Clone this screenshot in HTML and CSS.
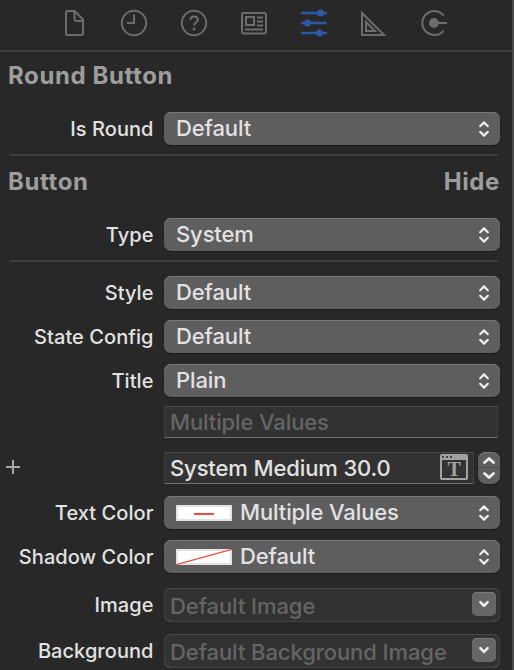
FILE: index.html
```html
<!DOCTYPE html>
<html lang="en">
<head>
<meta charset="utf-8">
<title>Attributes Inspector</title>
<link rel="stylesheet" href="styles.css">
</head>
<body>
<svg class="defs" width="0" height="0" aria-hidden="true">
  <symbol id="updown" viewBox="0 0 12 18"><path d="M2.200 6.200 6 2.400l3.800 3.800M2.200 11.800l3.800 3.800 3.800-3.800"/></symbol>
  <symbol id="down" viewBox="0 0 12 8"><path d="m2.400 2.200 3.600 3.600 3.600-3.600"/></symbol>
</svg>
<main class="inspector">
  <nav class="tabs">
    <svg class="tab" viewBox="0 0 28 28"><path d="M7 2h7.500l8.500 8.500V24q0 2-2 2H8q-2 0-2-2V4q0-2 2-2ZM14.500 2v8q0 2 2 2H23"/></svg>
    <svg class="tab" viewBox="0 0 28 28"><circle cx="14" cy="14" r="12.200"/><path d="M14 5.500v8.500H7"/></svg>
    <svg class="tab" viewBox="0 0 28 28"><circle cx="14" cy="14" r="12.200"/><path d="M10.500 11q.2-3.500 3.700-3.500t3.700 3.200c0 2.700-3.800 2.700-3.800 5.800"/><circle class="solid" cx="14" cy="20" r="1.400"/></svg>
    <svg class="tab" viewBox="0 0 28 28"><rect x="2" y="4" width="24" height="20.500" rx="2"/><path d="M6 8h8v8H6zM17 8.500h6M17 12.500h6M17 16.500h6M5 20.500h18"/></svg>
    <svg class="tab active" viewBox="0 0 28 28"><path d="M2.200 4h23.600M2.200 14h23.600M2.200 24h23.600"/><circle class="solid" cx="20.500" cy="4" r="3.500"/><circle class="solid" cx="7.500" cy="14" r="3.500"/><circle class="solid" cx="19.500" cy="24" r="3.500"/></svg>
    <svg class="tab" viewBox="0 0 28 28"><path d="M2 4V26H24ZM6 13v9h9Z"/></svg>
    <svg class="tab" viewBox="0 0 28 28"><path d="M23.700 6.500A12 12 0 1 0 23.700 21.500M14 14h13"/><circle class="solid" cx="14" cy="14" r="5"/></svg>
  </nav>

  <section class="group">
    <header class="heading"><h2>Round Button</h2></header>
    <div class="row"><label>Is Round</label><div class="select"><span>Default</span><svg class="arrows"><use href="#updown"/></svg></div></div>
  </section>

  <section class="group">
    <header class="heading"><h2>Button</h2><button class="hide">Hide</button></header>
    <div class="row"><label>Type</label><div class="select"><span>System</span><svg class="arrows"><use href="#updown"/></svg></div></div>
  </section>

  <section class="group fields">
    <div class="row"><label>Style</label><div class="select"><span>Default</span><svg class="arrows"><use href="#updown"/></svg></div></div>
    <div class="row"><label>State Config</label><div class="select"><span>Default</span><svg class="arrows"><use href="#updown"/></svg></div></div>
    <div class="row"><label>Title</label><div class="select"><span>Plain</span><svg class="arrows"><use href="#updown"/></svg></div></div>
    <div class="row title-row"><span></span><div class="field muted"><span>Multiple Values</span></div></div>
    <div class="row font-row">
      <svg class="plus" viewBox="0 0 14 14"><path d="M7 0v14M0 7h14"/></svg>
      <div class="font-control">
        <div class="field"><span>System Medium 30.0</span>
          <span class="font-button"><span class="dots"><i></i><i></i><i></i></span><b>T</b></span>
        </div>
        <div class="stepper"><svg viewBox="0 0 22 32"><path d="m6.500 10.500 4.500-4 4.500 4M6.500 21.500l4.500 4 4.500-4"/><path class="divide" d="M0 15.500h22"/></svg></div>
      </div>
    </div>
    <div class="row"><label>Text Color</label><div class="select"><svg class="swatch" viewBox="0 0 56 16"><path class="thick" d="M18 9h20"/></svg><span>Multiple Values</span><svg class="arrows"><use href="#updown"/></svg></div></div>
    <div class="row"><label>Shadow Color</label><div class="select"><svg class="swatch" viewBox="0 0 56 16"><path d="M0 15.700 56 .3"/></svg><span>Default</span><svg class="arrows"><use href="#updown"/></svg></div></div>
    <div class="row image-row"><label>Image</label><div class="combo"><span>Default Image</span><span class="drop"><svg><use href="#down"/></svg></span></div></div>
    <div class="row background-row"><label>Background</label><div class="combo"><span>Default Background Image</span><span class="drop"><svg><use href="#down"/></svg></span></div></div>
  </section>
</main>
</body>
</html>
```

FILE: styles.css
```css
* { box-sizing: border-box; }
body {
  margin: 0;
  background: #282828;
  color: #e2e2e2;
  font-family: Inter, "Liberation Sans", sans-serif;
}
.defs { display: block; }
.inspector { height: 670px; overflow: hidden; border-right: 2px solid #4a4a4a; }
.tabs {
  height: 52px;
  padding: 9px 0 0 60px;
  display: flex;
  gap: 32px;
  border-bottom: 2px solid #3e3e3e;
}
.tab { width: 28px; height: 28px; flex: none; fill: none; stroke: #6d6d6d; stroke-width: 2; }
.tab .solid { fill: #6d6d6d; stroke: none; }
.tab.active { stroke: #2b5ba8; stroke-width: 2.6; stroke-linecap: round; }
.tab.active .solid { fill: #2b5ba8; }

.group { padding-right: 12px; }
.group + .group { margin-top: 10px; }
.group + .group::before {
  content: "";
  display: block;
  height: 2px;
  margin: 0 2px 0 10px;
  background: #3e3e3e;
}
.heading {
  height: 62px;
  padding: 10px 0 0 8px;
  display: flex;
  justify-content: space-between;
  color: #9d9d9d;
}
.group:first-of-type .heading { height: 60px; padding-top: 8px; }
h2, .hide {
  margin: 0;
  padding: 0;
  border: 0;
  background: none;
  color: inherit;
  font: 700 24px/32px Inter, "Liberation Sans", sans-serif;
  letter-spacing: .6px;
  height: 32px;
}
.row {
  height: 32px;
  display: grid;
  grid-template-columns: 153.500px 336px;
  column-gap: 10.500px;
  line-height: 32px;
  white-space: nowrap;
}
.row + .row { margin-top: 12px; }
.fields .row:first-child { margin-top: 14px; }
.row.title-row { margin-top: 10px; }
.row.font-row { margin-top: 14px; }
.row.image-row { margin-top: 16px; }
.row.background-row { margin-top: 14px; }
label { padding-top: 1px; font-size: 20px; font-weight: 500; letter-spacing: .06px; justify-self: end; }
.select, .field, .combo { display: flex; font-size: 22px; font-weight: 500; letter-spacing: -.12px; }
.select {
  padding: 0 10px 0 12px;
  align-items: center;
  border-radius: 7px;
  background: #5e5e5e;
  box-shadow: inset 0 1px #797979, 0 1px 1px #1b1b1b;
}
.select > span { height: 32px; margin-top: -1px; }
.arrows {
  width: 12px;
  height: 18px;
  margin-left: auto;
  fill: none;
  stroke: #eee;
  stroke-width: 2.2;
  stroke-linecap: round;
  stroke-linejoin: round;
}
.swatch {
  width: 56px;
  height: 16px;
  margin-right: 8px;
  background: #fff;
  box-shadow: inset 0 0 0 2px #e3e3e3;
  fill: none;
  stroke: #e9503f;
  stroke-width: 1.2;
}
.swatch .thick { stroke-width: 2; }
.field {
  width: 334px;
  padding-left: 6px;
  background: #323232;
  box-shadow: inset 0 1px #484848, inset 1px 0 #3f3f3f, inset -1px 0 #3f3f3f, inset 0 -1px #707070;
}
.muted, .combo { color: #656565; }
.plus { width: 14px; height: 14px; margin: 8px 0 0 6px; stroke: #a5a5a5; stroke-width: 2; }
.font-control { display: flex; gap: 4px; }
.font-control .field { width: 310px; padding-right: 6px; justify-content: space-between; }
.font-button {
  width: 28px;
  height: 26px;
  margin-top: 2px;
  border: 2px solid #a2a2a2;
  border-radius: 2px;
  display: flex;
  flex-direction: column;
  align-items: center;
}
.dots { width: 24px; height: 4px; background: #a2a2a2; display: flex; gap: 2px; }
.dots i { width: 2px; height: 2px; background: #444; }
.font-button b { color: #a2a2a2; font: 700 20px/18px "Liberation Serif", serif; }
.stepper {
  width: 22px;
  border-radius: 8px;
  background: #5e5e5e;
  box-shadow: inset 0 1px #797979, 0 1px 1px #1b1b1b;
}
.stepper svg { display: block; fill: none; stroke: #eee; stroke-width: 2.7; stroke-linecap: round; stroke-linejoin: round; }
.stepper .divide { stroke: #4c4c4c; stroke-width: 1; }
.combo {
  padding: 1px 4px 0 6px;
  justify-content: space-between;
  border-radius: 7px;
  background: #323232;
  letter-spacing: -.08px;
  box-shadow: inset 0 1px #484848, inset 0 0 0 1px #424242, inset 0 -1px #707070;
}
.combo > span:first-child { padding-top: 1px; }
.drop {
  width: 24px;
  height: 24px;
  margin-top: 3px;
  display: grid;
  place-items: center;
  border-radius: 5px;
  background: #666;
  box-shadow: inset 0 1px #7c7c7c;
}
.drop svg { width: 12px; height: 8px; fill: none; stroke: #eee; stroke-width: 2.6; stroke-linecap: round; stroke-linejoin: round; }
```
